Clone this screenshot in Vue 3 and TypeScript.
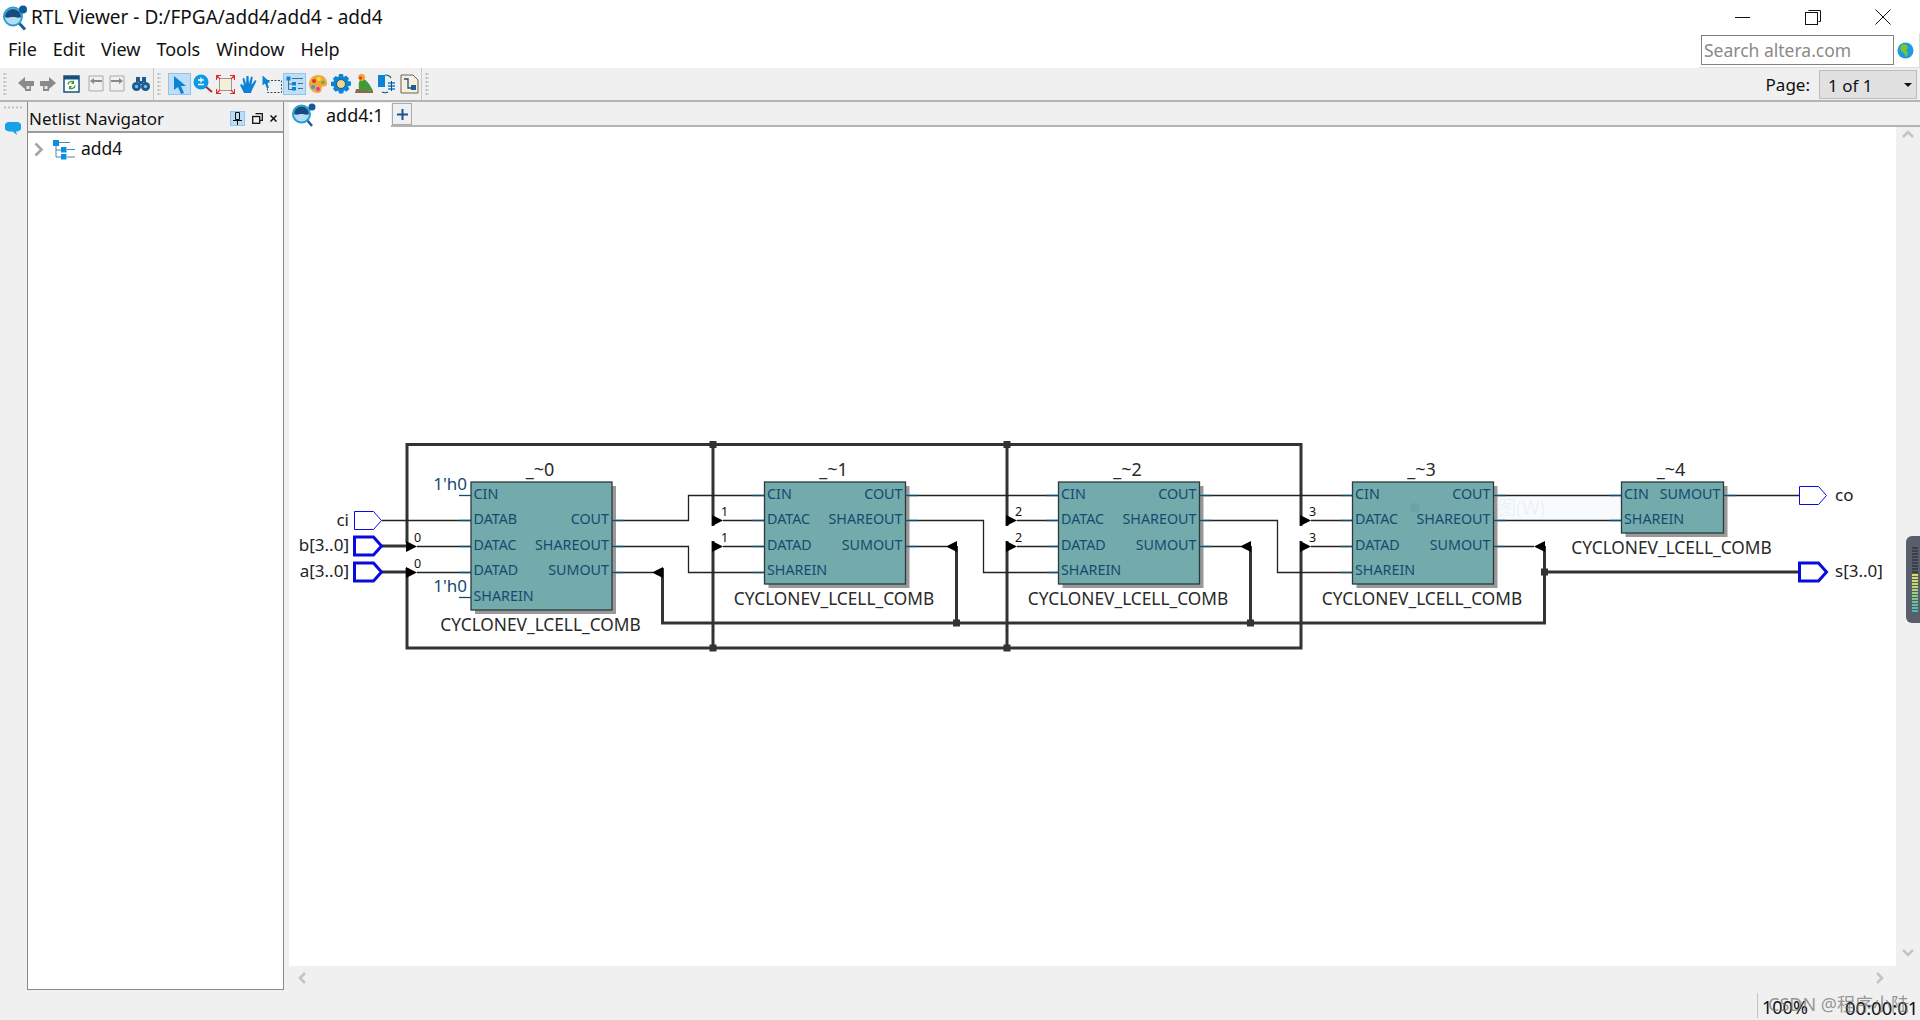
<template>
  <div class="window">
    <div class="titlebar">
      <svg class="app-icon" width="26" height="30" viewBox="0 0 26 30">
        <path d="M17 21l6 6.500" stroke="#1a5f90" stroke-width="3" />
        <circle cx="11" cy="14.500" r="9" fill="#b5dcf0" stroke="#2a9fd6" stroke-width="2" />
        <path d="M3 15a8 8 0 0 1 16 0c-3 1.500-5 0-8 0s-5 1.500-8 0z" fill="#174d7e" />
        <circle cx="21" cy="7.500" r="4" fill="#0d5a9c" />
      </svg>
      <span class="title">RTL Viewer - D:/FPGA/add4/add4 - add4</span>
      <div class="win-buttons">
        <svg width="16" height="16" viewBox="0 0 16 16"><path d="M0 8.500h15" stroke="#111" /></svg>
        <svg width="16" height="16" viewBox="0 0 16 16" fill="none" stroke="#111"><path d="M3.500 1.500h12v11h-2" /><rect x="0.500" y="3.500" width="12" height="12" fill="#fff" /></svg>
        <svg width="16" height="16" viewBox="0 0 16 16"><path d="M0.500 0.500l15 15M15.500 0.500l-15 15" stroke="#111" /></svg>
      </div>
    </div>

    <div class="menubar">
      <span v-for="item in menus" :key="item" class="menu-item">{{ item }}</span>
      <div class="search">
        <div class="search-box">Search altera.com</div>
        <svg width="17" height="17" viewBox="0 0 17 17">
          <circle cx="8.500" cy="8.500" r="8" fill="#1c9be0" />
          <path d="M5 2l5 1 1 3-2 2 2 3-2 4-2-4-3-2-1-3z" fill="#7cc52c" />
        </svg>
      </div>
    </div>

    <div class="toolbar">
      <div class="grip"></div>
      <div class="tool-group first">
        <svg width="16" height="18" viewBox="0 0 16 18"><path d="M0 8l7-6v4h9v5h-3v5H7v-2z" fill="#8a8a8a" /><rect x="8.500" y="11" width="3" height="3" fill="#e5e5e5" /></svg>
        <svg class="m6" width="16" height="18" viewBox="0 0 16 18"><path d="M16 8L9 2v4H0v5h3v5h6v-2z" fill="#8a8a8a" /><rect x="4.500" y="11" width="3" height="3" fill="#e5e5e5" /></svg>
        <svg class="m7" width="17" height="18" viewBox="0 0 17 18"><rect x="1" y="1" width="15" height="16" fill="#fff" stroke="#15507f" stroke-width="1.500" /><rect x="1" y="1" width="15" height="3.500" fill="#15507f" /><path d="M5 9.500a3.500 3.500 0 0 1 6-2M12 10.500a3.500 3.500 0 0 1-6 2" fill="none" stroke="#3f9a3a" stroke-width="1.500" /><path d="M11 5v4H8zM6 15v-4h3z" fill="#3f9a3a" /></svg>
        <svg class="m8" width="16" height="18" viewBox="0 0 16 18"><path d="M1 1h14v15H1z" fill="none" stroke="#aaa" /><path d="M2 6l4-3v2h8v2H6v2z" fill="#888" /></svg>
        <svg class="m5" width="16" height="18" viewBox="0 0 16 18"><path d="M1 1h14v15H1z" fill="none" stroke="#aaa" /><path d="M14 6l-4-3v2H2v2h8v2z" fill="#888" /></svg>
        <svg class="m7" width="18" height="16" viewBox="0 0 18 16" fill="#1a5a8e"><rect x="4" y="1" width="4" height="5" /><rect x="10" y="1" width="4" height="5" /><rect x="7" y="5" width="4" height="3" /><circle cx="4.500" cy="10.500" r="4.500" /><circle cx="13.500" cy="10.500" r="4.500" /><circle cx="4.500" cy="10.500" r="1.800" fill="#7fb6dc" /><circle cx="13.500" cy="10.500" r="1.800" fill="#7fb6dc" /></svg>
      </div>
      <div class="grip"></div>
      <div class="tool-group second">
        <span class="tool on">
          <svg width="14" height="19" viewBox="0 0 14 19"><path d="M1 1l12 10H8l3 7-3 1-3-7-4 3z" fill="#0b84d8" /></svg>
        </span>
        <span class="tool">
          <svg width="20" height="20" viewBox="0 0 20 20"><path d="M12 12l7 6" stroke="#b02a2a" stroke-width="2" /><circle cx="8" cy="8" r="7.500" fill="#0a9be6" /><path d="M5 6h6M8 3.500v5M5 10.500h6" stroke="#fff" stroke-width="1.300" /></svg>
        </span>
        <span class="tool">
          <svg width="19" height="19" viewBox="0 0 19 19"><rect x="3.500" y="3.500" width="12" height="12" fill="#f6efd8" stroke="#999" /><path d="M0.500 5V0.500H5M14 0.500h4.500V5M18.500 14v4.500H14M5 18.500H0.500V14M1 1l3 3M18 1l-3 3M18 18l-3-3M1 18l3-3" fill="none" stroke="#e02a2a" stroke-width="1.200" /></svg>
        </span>
        <span class="tool">
          <svg width="20" height="20" viewBox="0 0 20 20"><path d="M5 19l-4-8 1.500-1L5 12 3.500 4.500 5.300 4 7 10 7.500 2h2L10 10l2-7.500 1.800.5L12.500 11l3.500-5 1.500 1L13 16l-1 3z" fill="#0b84d8" /></svg>
        </span>
        <span class="tool">
          <svg width="20" height="19" viewBox="0 0 20 19"><rect x="5.500" y="5.500" width="14" height="12" fill="none" stroke="#1a4f7e" stroke-dasharray="2 1.500" /><path d="M0.500 0.500l8 7H5l2 5-2 1-2-5-2.500 2z" fill="#0b84d8" /></svg>
        </span>
        <span class="tool on">
          <svg width="18" height="16" viewBox="0 0 18 16"><rect x="0.500" y="0.500" width="4" height="4" fill="#0b84d8" /><path d="M2.500 4v9.500H6M2.500 8H6M6 2.500h11M12 7.500h5M12 12.500h5" stroke="#3a6f96" fill="none" /><rect x="6" y="6" width="4" height="3.500" fill="#0b84d8" /><rect x="6" y="11" width="4" height="3.500" fill="#0b84d8" /></svg>
        </span>
        <span class="tool">
          <svg width="20" height="20" viewBox="0 0 20 20"><path d="M10 1c6 0 9.500 4 9 9-.3 3-4 2-5 3s1 5-3.500 6C5 19.500 1 15 1 10s4-9 9-9z" fill="#f3a73b" /><circle cx="6" cy="7" r="2" fill="#d8342c" /><circle cx="11" cy="5" r="2" fill="#f5e04a" /><circle cx="5" cy="13" r="2" fill="#2f9fe0" /><circle cx="10" cy="15" r="2" fill="#d23fa8" /><circle cx="15" cy="8.500" r="1.800" fill="#5ab540" /></svg>
        </span>
        <span class="tool">
          <svg width="20" height="20" viewBox="0 0 20 20"><path d="M8 0h4l.6 3 2.600-1.300 2.800 2.800L16.700 7l3.300.6v4l-3 .7 1.300 2.600-2.800 2.800-2.600-1.400-.7 3.200H8l-.7-3.100-2.600 1.300L2 15l1.300-2.600L0 12V8l3.200-.8L2 4.600 4.700 2l2.600 1.200z" fill="#0b84d8" /><circle cx="10" cy="10" r="4.500" fill="#f4d488" stroke="#1a5a8e" /></svg>
        </span>
        <span class="tool">
          <svg width="20" height="20" viewBox="0 0 20 20"><path d="M1 19h18v-2L6 15H2z" fill="#8a6a4c" /><path d="M5 15C4 8 6 4 9 5c4 1 8 7 10 12-5 0-10-1-14-2z" fill="#3f9a3a" /><path d="M4 3a3.500 3.500 0 0 1 7 1c0 2-2 3-3 3-2 0-4-2-4-4z" fill="#f4a32b" /><circle cx="6.500" cy="4" r="1.500" fill="#d8342c" /></svg>
        </span>
        <span class="tool">
          <svg width="20" height="20" viewBox="0 0 20 20"><rect x="1" y="1" width="7" height="12" fill="#0b84d8" /><path d="M8 1c3 0 5 1 6 3M5 18c2 1 4 1 6 0" fill="none" stroke="#1a4f7e" stroke-width="1.200" /><path d="M11 9h7M11 12h7M11 15h7" stroke="#0b84d8" stroke-width="1.500" /><path d="M14.500 7v10" stroke="#1a4f7e" /></svg>
        </span>
        <span class="tool">
          <svg width="19" height="20" viewBox="0 0 19 20"><path d="M1 1h12l5 5v13H1z" fill="#f7efdc" stroke="#6d6454" /><path d="M4 5h4v9h6" fill="none" stroke="#1a4f7e" stroke-width="1.300" /><rect x="11" y="11" width="5" height="5" fill="#1a5f96" /></svg>
        </span>
      </div>
      <div class="grip"></div>
      <div class="page">
        <span>Page:</span>
        <div class="page-combo">1 of 1<i class="caret"></i></div>
      </div>
    </div>

    <div class="main">
      <div class="rail">
        <div class="rail-grip"></div>
        <svg width="16" height="14" viewBox="0 0 16 14"><path d="M4 0h8a4 4 0 0 1 0 9.500h-1l1 3.500-4.500-3.500H4A4 4 0 0 1 4 0z" fill="#17a2e8" /></svg>
      </div>

      <div class="navigator">
        <div class="nav-head">
          <span>Netlist Navigator</span>
          <div class="nav-buttons">
            <span class="pin">
              <svg width="9" height="13" viewBox="0 0 9 13" fill="none" stroke="#111"><path d="M2.500 0.500h4v7h-4zM0 8.500h9M4.500 8.500V13" /></svg>
            </span>
            <svg width="11" height="11" viewBox="0 0 11 11" fill="none" stroke="#111" stroke-width="1.300"><path d="M3.500 0.700h6.800v6.600H8" /><rect x="0.700" y="3.500" width="7" height="6.800" /></svg>
            <svg width="7" height="7" viewBox="0 0 7 7"><path d="M0.500 0.500l6 6M6.500 0.500l-6 6" stroke="#111" stroke-width="1.500" /></svg>
          </div>
        </div>
        <div class="nav-tree">
          <svg width="10" height="15" viewBox="0 0 10 15"><path d="M1.500 1.500l6 6-6 6" fill="none" stroke="#a3a3a3" stroke-width="2.500" /></svg>
          <svg class="tree-icon" width="23" height="20" viewBox="0 0 23 20">
            <rect x="0" y="0" width="6" height="6" fill="#0b8fe0" />
            <path d="M3 5v12h6M3 10h6M6 2.500h11M14 9.500h8M14 17h8" stroke="#4e87ab" fill="none" />
            <rect x="8" y="7" width="5.500" height="5.500" fill="#0b8fe0" />
            <rect x="8" y="14" width="5.500" height="5.500" fill="#0b8fe0" />
          </svg>
          <span>add4</span>
        </div>
      </div>

      <div class="workspace">
        <div class="tabs">
          <div class="tab">
            <svg width="24" height="24" viewBox="0 0 24 24">
              <path d="M15 17l5 6" stroke="#1a5f90" stroke-width="2.500" />
              <circle cx="9.500" cy="11" r="8.500" fill="#b5dcf0" stroke="#2a9fd6" stroke-width="2" />
              <path d="M2 11a7.500 7.500 0 0 1 15 0c-3 1.500-5 0-7.500 0S5 12.500 2 11z" fill="#174d7e" />
              <circle cx="20" cy="4" r="3.500" fill="#0d5a9c" />
            </svg>
            <span>add4:1</span>
          </div>
          <div class="tab-add">
            <svg width="11" height="11" viewBox="0 0 11 11"><path d="M5.500 0v11M0 5.500h11" stroke="#1a5588" stroke-width="2" /></svg>
          </div>
        </div>

        <div class="view-row">
          <svg class="schematic" width="1607" height="839" viewBox="289 127 1607 839">
            <!-- pale strip left behind by the screen capture tool -->
            <rect x="1497" y="497" width="124" height="23" fill="#f8fbfe" />
            <!-- thick buses -->
            <g fill="none" stroke="#333" stroke-width="3">
              <path v-for="d in busPaths" :key="d" :d="d" />
            </g>
            <rect v-for="j in junctions" :key="j[0] + '-' + j[1]" :x="j[0] - 3.500" :y="j[1] - 3.500" width="7" height="7" fill="#333" />
            <!-- thin wires -->
            <g fill="none" stroke="#222" stroke-width="1.300">
              <path v-for="d in wirePaths" :key="d" :d="d" />
            </g>
            <path v-for="d in arrows" :key="d" :d="d" fill="#000" />

            <g v-for="b in blocks" :key="b.name">
              <rect :x="b.x + 4" :y="486" :width="b.w" :height="b.h" fill="#999" />
              <rect :x="b.x" :y="482" :width="b.w" :height="b.h" fill="#73aaab" stroke="#2c3a3c" stroke-width="1.300" />
              <text :x="b.x + b.w / 2 - 1.500" y="476" text-anchor="middle" class="inst name">{{ b.name }}</text>
              <text :x="b.x + b.w / 2 - 1" :y="482 + b.h + 20.500" text-anchor="middle" class="inst">CYCLONEV_LCELL_COMB</text>
              <g v-for="p in b.inputs" :key="p[0]">
                <path :d="`M${b.x - 12} ${p[1] + 0.5}H${b.x}`" class="stub" />
                <text :x="b.x + 2.500" :y="portBase(p[1])" class="port">{{ p[0] }}</text>
              </g>
              <g v-for="p in b.outputs" :key="p[0]">
                <path :d="`M${b.x + b.w} ${p[1] + 0.5}h12`" class="stub" />
                <text :x="b.x + b.w - 3" :y="portBase(p[1])" text-anchor="end" class="port">{{ p[0] }}</text>
              </g>
            </g>

            <text x="467" y="490" text-anchor="end" class="const">1'h0</text>
            <text x="467" y="592" text-anchor="end" class="const">1'h0</text>

            <text v-for="n in busLabels" :key="n[1] + '-' + n[2]" :x="n[1]" :y="n[2]" class="bus-no">{{ n[0] }}</text>

            <path v-for="p in pins" :key="p.label" :d="pinPath(p.y)" :class="p.bus ? 'pin-bus' : 'pin-thin'" :transform="`translate(${p.x} 0)`" />
            <text v-for="p in pins" :key="p.label + 't'" :x="p.tx" :y="p.y + 5" :text-anchor="p.out ? 'start' : 'end'" class="pin-name">{{ p.label }}</text>

            <circle cx="1415" cy="508" r="5" fill="#5f9a9e" opacity="0.4" />
            <text x="1440" y="515" class="ghost">窗口截图(W)</text>
          </svg>
          <div class="vscroll">
            <svg width="12" height="8" viewBox="0 0 12 8"><path d="M1 7l5-5 5 5" fill="none" stroke="#c4c4c4" stroke-width="2.500" /></svg>
            <svg width="12" height="8" viewBox="0 0 12 8"><path d="M1 1l5 5 5-5" fill="none" stroke="#c4c4c4" stroke-width="2.500" /></svg>
          </div>
        </div>

        <div class="hscroll">
          <svg width="8" height="12" viewBox="0 0 8 12"><path d="M7 1L2 6l5 5" fill="none" stroke="#c4c4c4" stroke-width="2.500" /></svg>
          <svg width="8" height="12" viewBox="0 0 8 12"><path d="M1 1l5 5-5 5" fill="none" stroke="#c4c4c4" stroke-width="2.500" /></svg>
        </div>
      </div>
    </div>

    <div class="statusbar">
      <div class="status-sep"></div>
      <span class="zoom-val">100%</span>
      <span class="time-val">00:00:01</span>
      <span class="watermark">CSDN @程序小陆</span>
    </div>

    <div class="meter">
      <i v-for="c in meterBars" :key="c.id" :style="{ background: c.color }"></i>
    </div>
  </div>
</template>

<script setup lang="ts">
type Port = [string, number]

interface Block {
  name: string
  x: number
  w: number
  h: number
  inputs: Port[]
  outputs: Port[]
}

interface Pin {
  label: string
  x: number
  y: number
  tx: number
  bus: boolean
  out: boolean
}

const menus = ['File', 'Edit', 'View', 'Tools', 'Window', 'Help']

const midInputs: Port[] = [['CIN', 495], ['DATAC', 520], ['DATAD', 546], ['SHAREIN', 572]]
const midOutputs: Port[] = [['COUT', 495], ['SHAREOUT', 520], ['SUMOUT', 546]]

const blocks: Block[] = [
  {
    name: '_~0', x: 471, w: 141, h: 128,
    inputs: [['CIN', 495], ['DATAB', 520], ['DATAC', 546], ['DATAD', 572], ['SHAREIN', 597]],
    outputs: [['COUT', 520], ['SHAREOUT', 546], ['SUMOUT', 572]],
  },
  { name: '_~1', x: 764.500, w: 141, h: 102, inputs: midInputs, outputs: midOutputs },
  { name: '_~2', x: 1058.500, w: 141, h: 102, inputs: midInputs, outputs: midOutputs },
  { name: '_~3', x: 1352.500, w: 141, h: 102, inputs: midInputs, outputs: midOutputs },
  {
    name: '_~4', x: 1621.500, w: 102, h: 51,
    inputs: [['CIN', 495], ['SHAREIN', 520]],
    outputs: [['SUMOUT', 495]],
  },
]

const busPaths = [
  'M407 543V444.500H1301V526',
  'M407 568V648H1301V541',
  'M713 444.500V526M713 541V648',
  'M1007 444.500V526M1007 541V648',
  'M382 546H407M382 572H407',
  'M662.500 568V623H1544.500V546',
  'M956.500 623V546M1250.500 623V546',
  'M1544.500 572H1799',
]

const junctions = [
  [713, 444.500], [1007, 444.500], [713, 648], [1007, 648],
  [956.500, 623], [1250.500, 623], [1544.500, 572],
]

const wirePaths = [
  'M382 520.500H471',
  'M417 546.500H471M417 572.500H471',
  'M612 520.500H688.500V495.500H764',
  'M612 546.500H688.500V572.500H764',
  'M612 572.500H653',
  'M723 520.500H764M723 546.500H764',
  'M905 495.500H1058',
  'M905 520.500H983.500V572.500H1058',
  'M905 546.500H947',
  'M1017 520.500H1058M1017 546.500H1058',
  'M1199 495.500H1352',
  'M1199 520.500H1277.500V572.500H1352',
  'M1199 546.500H1241',
  'M1311 520.500H1352M1311 546.500H1352',
  'M1493 495.500H1621',
  'M1493 520.500H1621',
  'M1493 546.500H1534',
  'M1723 495.500H1799',
]

const arrows = [
  'M406 541L417 546.500L406 552Z',
  'M406 567L417 572.500L406 578Z',
  'M712 515L723 520.500L712 526Z',
  'M712 541L723 546.500L712 552Z',
  'M1006 515L1017 520.500L1006 526Z',
  'M1006 541L1017 546.500L1006 552Z',
  'M1300 515L1311 520.500L1300 526Z',
  'M1300 541L1311 546.500L1300 552Z',
  'M663 567L652 572.500L663 578Z',
  'M957 541L946 546.500L957 552Z',
  'M1251 541L1240 546.500L1251 552Z',
  'M1545 541L1534 546.500L1545 552Z',
]

const busLabels: [string, number, number][] = [
  ['0', 414, 542],
  ['0', 414, 568],
  ['1', 721, 516],
  ['1', 721, 542],
  ['2', 1015, 516],
  ['2', 1015, 542],
  ['3', 1309, 516],
  ['3', 1309, 542],
]

const pins: Pin[] = [
  { label: 'ci', x: 354.500, y: 520.500, tx: 349, bus: false, out: false },
  { label: 'b[3..0]', x: 354.500, y: 546, tx: 349, bus: true, out: false },
  { label: 'a[3..0]', x: 354.500, y: 572, tx: 349, bus: true, out: false },
  { label: 'co', x: 1799.500, y: 495.500, tx: 1835, bus: false, out: true },
  { label: 's[3..0]', x: 1799.500, y: 572, tx: 1835, bus: true, out: true },
]

// pentagon shape shared by input and output pins
function pinPath(y: number): string {
  return `M0 ${y - 9}H19L27 ${y}L19 ${y + 9}H0Z`
}

// the lower rows sit a pixel higher on the wire than the upper ones
function portBase(y: number): number {
  return y === 572 ? y + 3 : y + 4
}

const meterColors = [
  '#3a4048', '#3a4048', '#3a4048', '#3a4048', '#3a4048', '#3a4048', '#3a4048', '#3a4048', '#3a4048',
  '#e0d860', '#e0d860', '#d8d860', '#c8d868', '#b8d870', '#a8d478', '#98d080', '#88cc88', '#78c890',
  '#68c498', '#5cc0a0', '#54bca8', '#50b8a8',
]
const meterBars = meterColors.map((color, id) => ({ id, color }))
</script>

<style>
html,
body {
  margin: 0;
  padding: 0;
  background: #fff;
}
</style>

<style scoped>
.window {
  position: relative;
  width: 1920px;
  height: 1020px;
  display: flex;
  flex-direction: column;
  overflow: hidden;
  background: #fff;
  color: #111;
  font-family: "Noto Sans", "Noto Sans CJK SC", sans-serif;
  font-size: 17px;
}
.titlebar {
  height: 33px;
  display: flex;
  align-items: center;
  flex: none;
}
.app-icon {
  margin-left: 2px;
}
.title {
  margin-left: 3px;
  font-size: 19px;
}
.win-buttons {
  margin-left: auto;
  display: flex;
  gap: 54px;
  padding-right: 29px;
}
.menubar {
  height: 35px;
  display: flex;
  align-items: center;
  flex: none;
  padding-left: 8px;
  gap: 16px;
  font-size: 18px;
}
.menu-item {
  position: relative;
  top: -2px;
}
.search {
  margin-left: auto;
  display: flex;
  align-items: center;
  gap: 3px;
  height: 34px;
  padding-right: 5px;
  border-right: 1px solid #ddd;
  border-bottom: 1px solid #ddd;
  padding-left: 2px;
}
.search-box {
  width: 189px;
  height: 28px;
  border: 1.500px solid #808080;
  color: #8a8a8a;
  font-size: 17.500px;
  line-height: 28px;
  padding-left: 2px;
}
.toolbar {
  height: 34px;
  flex: none;
  display: flex;
  align-items: center;
  background: #f0f0f0;
  border-bottom: 2px solid #b4b4b4;
  box-sizing: border-box;
}
.grip {
  width: 4px;
  height: 24px;
  margin-left: 3px;
  background-image: radial-gradient(circle, #b8b8b8 1px, transparent 1.200px);
  background-size: 3px 4px;
}
.tool-group {
  display: flex;
  align-items: center;
  height: 32px;
  box-sizing: border-box;
  border-right: 1px solid #c8c8c8;
}
.tool-group.first {
  width: 147px;
  padding-left: 11px;
}
.m5 { margin-left: 5px; }
.m6 { margin-left: 6px; }
.m7 { margin-left: 7px; }
.m8 { margin-left: 8px; }
.tool-group.second {
  width: 261px;
  padding-left: 7px;
}
.tool {
  width: 23px;
  height: 22px;
  flex: none;
  display: flex;
  align-items: center;
  justify-content: center;
  border: 1px solid transparent;
  box-sizing: border-box;
}
.tool.on {
  background: #c0def5;
  border-color: #90c4ee;
}
.page {
  margin-left: auto;
  display: flex;
  align-items: center;
  gap: 9px;
  padding-right: 3px;
}
.page-combo {
  position: relative;
  width: 98px;
  height: 29px;
  box-sizing: border-box;
  background: #e1e1e1;
  border: 1px solid #bdbdbd;
  line-height: 29px;
  padding-left: 8px;
}
.caret {
  position: absolute;
  right: 4px;
  top: 12px;
  border-left: 4px solid transparent;
  border-right: 4px solid transparent;
  border-top: 4px solid #111;
}
.main {
  flex: 1;
  min-height: 0;
  display: flex;
  background: #f0f0f0;
}
.rail {
  width: 27px;
  flex: none;
  display: flex;
  flex-direction: column;
  align-items: center;
  padding-top: 4px;
  gap: 13px;
  box-sizing: border-box;
  padding-right: 1px;
}
.rail-grip {
  width: 20px;
  height: 3px;
  background-image: radial-gradient(circle, #bcbcbc 1px, transparent 1.200px);
  background-size: 4px 3px;
}
.navigator {
  width: 257px;
  flex: none;
  display: flex;
  flex-direction: column;
  border-left: 1px solid #8a8a8a;
  border-right: 1px solid #8a8a8a;
  border-bottom: 1px solid #8a8a8a;
  box-sizing: border-box;
}
.nav-head {
  height: 31px;
  flex: none;
  display: flex;
  align-items: center;
  padding: 3px 0 0 1px;
  background: #f0f0f0;
  border-bottom: 2px solid #9a9a9a;
  box-sizing: border-box;
  font-size: 17px;
}
.nav-buttons {
  margin-left: auto;
  display: flex;
  align-items: center;
  gap: 7px;
  padding-right: 6px;
}
.pin {
  width: 15px;
  height: 15px;
  display: flex;
  align-items: center;
  justify-content: center;
  background: #bcdcf4;
  border: 1px solid #90c4ee;
  box-sizing: border-box;
}
.nav-tree {
  flex: 1;
  background: #fff;
  display: flex;
  align-items: flex-start;
  padding: 3px 0 0 6px;
  font-size: 17.500px;
  line-height: 24px;
}
.nav-tree > svg:first-child {
  margin-top: 6px;
}
.tree-icon {
  margin: 4px 5px 0 9px;
}
.workspace {
  flex: 1;
  min-width: 0;
  margin-left: 5px;
  display: flex;
  flex-direction: column;
}
.tabs {
  height: 25px;
  flex: none;
  display: flex;
  border-bottom: 2px solid #b4b4b4;
  box-sizing: border-box;
  padding-top: 1px;
}
.tab {
  width: 102px;
  height: 24px;
  display: flex;
  align-items: center;
  background: #fff;
  font-size: 18px;
  gap: 10px;
  box-sizing: border-box;
  padding-left: 3px;
}
.tab-add {
  width: 20px;
  height: 22px;
  margin-left: 1px;
  display: flex;
  align-items: center;
  justify-content: center;
  border: 1px solid #aaa;
  box-sizing: border-box;
}
.view-row {
  flex: 1;
  min-height: 0;
  display: flex;
}
.schematic {
  background: #fff;
  display: block;
  flex: none;
}
.vscroll {
  flex: 1;
  display: flex;
  flex-direction: column;
  align-items: center;
  justify-content: space-between;
  padding: 3px 0 9px;
}
.hscroll {
  height: 24px;
  flex: none;
  display: flex;
  align-items: center;
  justify-content: space-between;
  padding: 0 36px 0 9px;
}
.statusbar {
  position: relative;
  height: 30px;
  flex: none;
  background: #f0f0f0;
  font-size: 18px;
}
.status-sep {
  position: absolute;
  left: 1757px;
  top: 3px;
  bottom: 2px;
  border-left: 1px solid #c4c4c4;
}
.zoom-val {
  position: absolute;
  left: 1762px;
  top: 5px;
}
.time-val {
  position: absolute;
  left: 1845px;
  top: 5px;
  font-size: 18.500px;
}
.watermark {
  position: absolute;
  left: 1768px;
  top: 0;
  font-size: 18px;
  color: rgba(110, 110, 110, 0.7);
  white-space: nowrap;
}
.meter {
  position: absolute;
  left: 1906px;
  top: 536px;
  width: 14px;
  height: 87px;
  background: #585f6a;
  border-radius: 6px 0 0 6px;
  display: flex;
  flex-direction: column;
  gap: 1px;
  padding: 11px 0 0 6px;
  box-sizing: border-box;
}
.meter i {
  display: block;
  height: 2px;
  width: 6px;
}
.inst {
  font-size: 17.300px;
  fill: #2a2a2a;
}
.inst.name {
  font-size: 18px;
}
.port {
  font-size: 14.300px;
  fill: #164a70;
}
.const {
  font-size: 17px;
  fill: #164a70;
}
.bus-no {
  font-size: 12.500px;
  fill: #111;
}
.pin-name {
  font-size: 17px;
  fill: #222;
}
.stub {
  stroke: #0d4f73;
  stroke-width: 1.300;
  fill: none;
}
.pin-thin {
  fill: #fff;
  stroke: #0a0ae0;
  stroke-width: 1;
}
.pin-bus {
  fill: #fff;
  stroke: #0a0ae0;
  stroke-width: 3;
}
.ghost {
  font-size: 19px;
  fill: rgba(140, 175, 205, 0.13);
}
</style>
